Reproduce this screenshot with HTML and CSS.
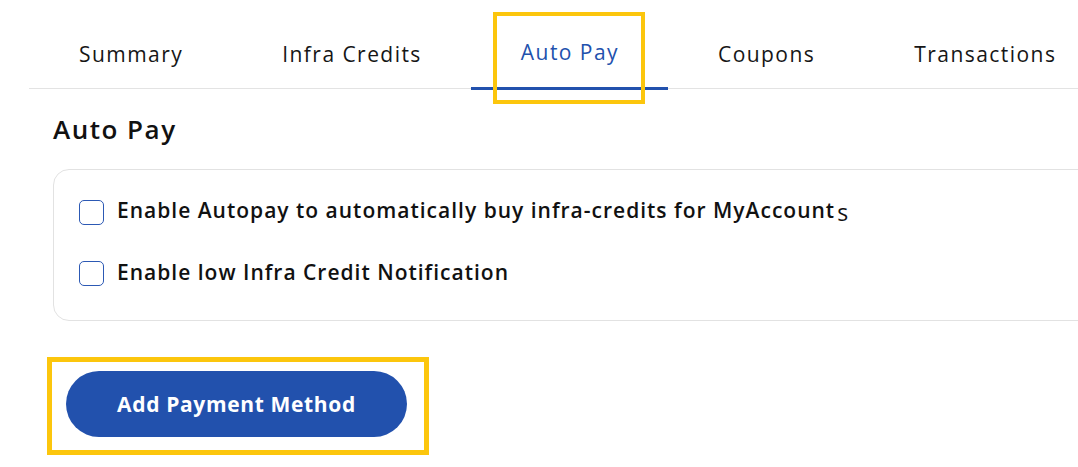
FILE: index.html
```html
<!DOCTYPE html>
<html lang="en">
<head>
<meta charset="utf-8">
<title>Auto Pay</title>
<link rel="stylesheet" href="styles.css">
</head>
<body>
<div class="page">
  <nav class="tabs">
    <a class="tab">Summary</a>
    <a class="tab">Infra Credits</a>
    <a class="tab active">Auto Pay<span class="mark"></span></a>
    <a class="tab">Coupons</a>
    <a class="tab">Transactions</a>
  </nav>
  <section class="content">
    <h2 class="title">Auto Pay</h2>
    <div class="card">
      <label class="option"><span class="box"></span><span class="label">Enable Autopay to automatically buy infra-credits for MyAccount<span class="tail">s</span></span></label>
      <label class="option"><span class="box"></span><span class="label">Enable low Infra Credit Notification</span></label>
    </div>
    <div class="btn-frame">
      <button class="btn">Add Payment Method</button>
    </div>
  </section>
</div>
</body>
</html>
```
FILE: styles.css
```css
* { box-sizing: border-box; }
html, body { margin: 0; padding: 0; background: #fff; }
body {
  font-family: "Open Sans", "Liberation Sans", sans-serif;
  color: #111;
  overflow: hidden;
  width: 1078px;
  height: 467px;
}
.page { width: 1078px; }

.tabs {
  display: flex;
  margin-left: 29px;
  margin-right: -40px;
  border-bottom: 1px solid #e3e3e3;
  height: 89px;
}
.tab {
  position: relative;
  display: flex;
  align-items: center;
  padding: 19px 49px 0 50px;
  height: 89px;
  font-size: 21px;
  letter-spacing: 1.45px;
  color: #161616;
  white-space: nowrap;
  text-decoration: none;
}
.tab.active {
  color: #2251ad;
  border-bottom: 3px solid #2251ad;
  margin-bottom: -1px;
  height: 90px;
  padding-top: 17px;
}
.mark {
  position: absolute;
  left: 22px;
  right: 23px;
  top: 12px;
  height: 92px;
  border: 4px solid #fcc60d;
}

.content { padding-left: 53px; }
.title {
  margin: 24px 0 0;
  font-size: 26px;
  line-height: 32px;
  letter-spacing: 1.5px;
  font-weight: 600;
  color: #111;
}
.card {
  margin-top: 24px;
  margin-right: -40px;
  border: 1px solid #e2e2e2;
  border-radius: 16px;
  padding: 30px 0 34px 25px;
  display: flex;
  flex-direction: column;
  gap: 36px;
}
.option {
  display: flex;
  align-items: center;
  gap: 13px;
  height: 25px;
}
.box {
  width: 25px;
  height: 25px;
  border: 1.5px solid #2c59b4;
  border-radius: 5px;
  flex: none;
}
.label {
  font-size: 21px;
  letter-spacing: 1px;
  line-height: 25px;
  font-weight: 600;
  color: #111;
  white-space: nowrap;
  margin-top: -3px;
}
.tail {
  font-weight: 400;
  font-size: 23px;
  letter-spacing: 0;
  margin-left: 2px;
  vertical-align: -3px;
}
.btn-frame {
  display: inline-block;
  margin: 36px 0 0 -6px;
  border: 5px solid #fcc60d;
  padding: 9px 17px 13px 14px;
}
.btn {
  display: block;
  height: 66px;
  width: 341px;
  border: none;
  border-radius: 33px;
  background: #2251ad;
  color: #fff;
  font-family: inherit;
  font-size: 21px;
  letter-spacing: 0.65px;
  font-weight: 700;
  padding: 0;
}
```
